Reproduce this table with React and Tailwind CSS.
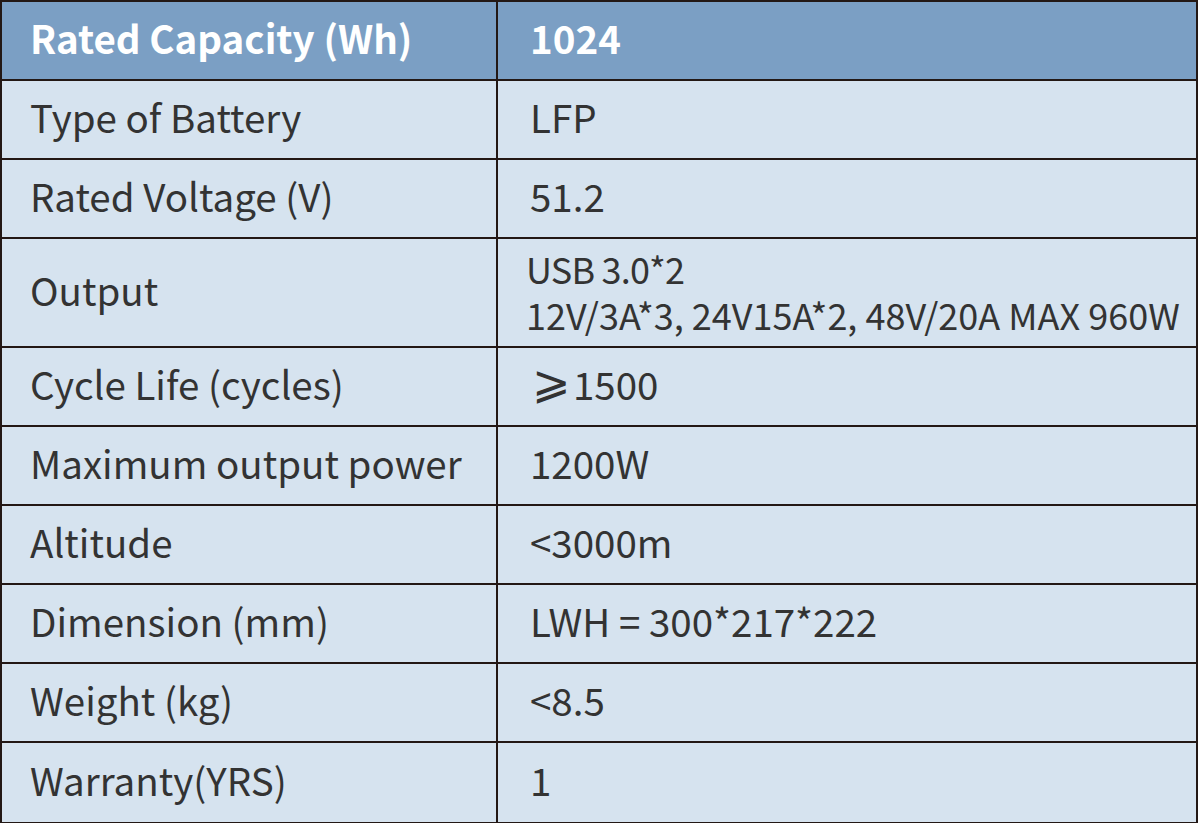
import React from 'react';

const rows = [
  ['Type of Battery', 'LFP'],
  ['Rated Voltage (V)', '51.2'],
  ['Output', null],
  ['Cycle Life (cycles)', 'geq'],
  ['Maximum output power', '1200W'],
  ['Altitude', '<3000m'],
  ['Dimension (mm)', 'LWH = 300*217*222'],
  ['Weight (kg)', '<8.5'],
  ['Warranty(YRS)', '1'],
];

const font = { fontFamily: '"Noto Sans CJK SC", "Noto Sans", sans-serif' };

export default function App() {
  return (
    <div className="w-[1198px] h-[823px] bg-white" style={font}>
      <div className="w-[1198px] border-2 border-[#231815] bg-[#d6e3ef] text-[#333333]">
        <div className="flex h-[79px] bg-[#7b9fc4] border-b-2 border-[#231815] text-white font-bold text-[38.5px]">
          <div className="w-[496px] shrink-0 border-r-2 border-[#231815] flex items-center pl-[28px] pb-[6px]">Rated Capacity (Wh)</div>
          <div className="flex-1 flex items-center pl-[32px] pb-[6px]">1024</div>
        </div>
        {rows.map(([label, value], i) => (
          <div
            key={label}
            className={`flex ${label === 'Output' ? 'h-[109px]' : 'h-[79px]'} ${i < rows.length - 1 ? 'border-b-2 border-[#231815]' : ''} text-[38.5px]`}
          >
            <div className="w-[496px] shrink-0 border-r-2 border-[#231815] flex items-center pl-[28px] pb-[5px]">{label}</div>
            {value === null ? (
              <div className="flex-1 flex flex-col justify-center gap-[2px] pl-[28px] pb-[4px] text-[36px] leading-[44px]">
                <span className="tracking-[-0.8px]">USB 3.0*2</span>
                <span className="whitespace-nowrap">12V/3A*3, 24V15A*2, 48V/20A MAX 960W</span>
              </div>
            ) : value === 'geq' ? (
              <div className="flex-1 flex items-center pl-[34px] pb-[5px]">
                <span className="text-[46px] leading-none mr-[2px] mb-[12px]">⩾</span>
                <span>1500</span>
              </div>
            ) : (
              <div className="flex-1 flex items-center pl-[32px] pb-[5px]">{value}</div>
            )}
          </div>
        ))}
      </div>
    </div>
  );
}
